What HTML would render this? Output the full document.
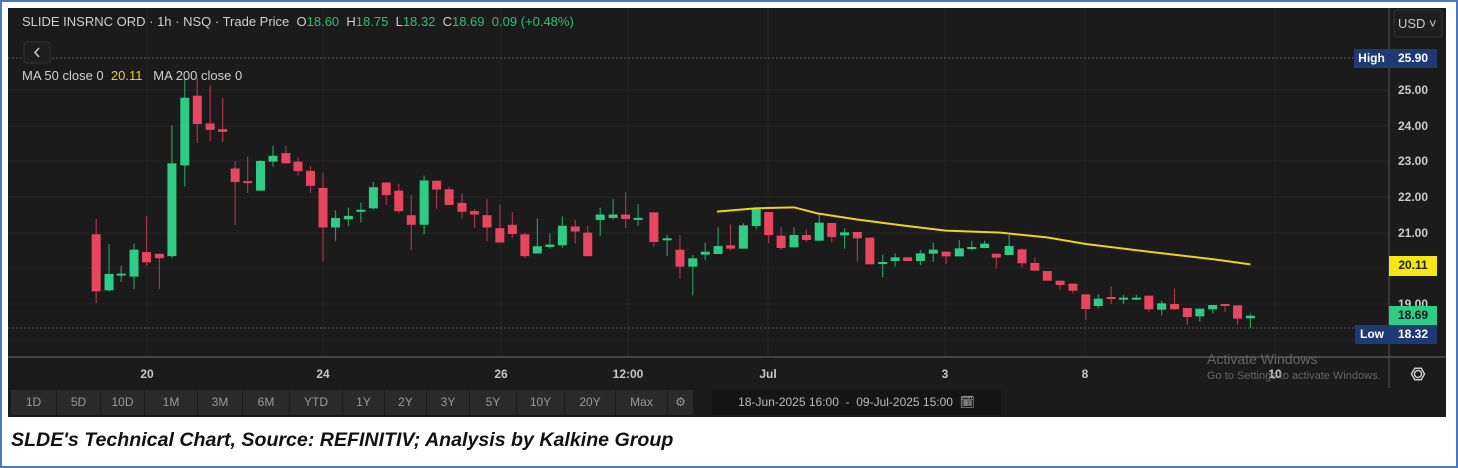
<!DOCTYPE html>
<html><head><meta charset="utf-8"><style>
*{margin:0;padding:0;box-sizing:border-box}
body{width:1458px;height:468px;background:#fff;position:relative;overflow:hidden;font-family:"Liberation Sans",sans-serif}
.frame{position:absolute;left:0;top:0;width:1458px;height:468px;border:2px solid #4a78c8}
.chart{position:absolute;left:8px;top:8px;width:1438px;height:409px;background:#1b1b1b}
.t{position:absolute;white-space:nowrap}
.g{color:#2fbf7a}
.b{position:absolute;top:390px;height:25px;background:#2a2a2a;color:#9a9a9a;font-size:12px;text-align:center;line-height:25px}
.lab{position:absolute;font-size:12px;font-weight:bold;text-align:center;line-height:19px}
.tl{position:absolute;top:367px;color:#c8c8c8;font-size:12px;font-weight:bold;transform:translateX(-50%)}
</style></head><body>
<div class="frame"></div>
<div class="chart"></div>
<svg style="position:absolute;left:0;top:0" width="1458" height="468" id="s">
<g stroke="#262626" stroke-width="1">
<line x1="8" y1="90" x2="1389" y2="90"/><line x1="8" y1="126" x2="1389" y2="126"/><line x1="8" y1="161" x2="1389" y2="161"/><line x1="8" y1="197" x2="1389" y2="197"/><line x1="8" y1="233" x2="1389" y2="233"/><line x1="8" y1="268" x2="1389" y2="268"/><line x1="8" y1="304" x2="1389" y2="304"/><line x1="8" y1="340" x2="1389" y2="340"/>
<line x1="147" y1="8" x2="147" y2="357"/><line x1="323" y1="8" x2="323" y2="357"/><line x1="501" y1="8" x2="501" y2="357"/><line x1="628" y1="8" x2="628" y2="357"/><line x1="768" y1="8" x2="768" y2="357"/><line x1="945" y1="8" x2="945" y2="357"/><line x1="1085" y1="8" x2="1085" y2="357"/><line x1="1275" y1="8" x2="1275" y2="357"/>
</g>
<line x1="8" y1="58" x2="1389" y2="58" stroke="#555" stroke-dasharray="2,2"/>
<line x1="8" y1="328" x2="1389" y2="328" stroke="#555" stroke-dasharray="2,2"/>
<line x1="8" y1="357" x2="1446" y2="357" stroke="#444" stroke-width="2"/>
<line x1="1389" y1="8" x2="1389" y2="388" stroke="#555" stroke-width="1"/>
<g id="c"></g>
<polyline id="ma" fill="none" stroke="#f0d020" stroke-width="2"/>
<rect x="1394" y="10" width="48" height="27" rx="3" fill="#1e1e1e" stroke="#333"/>
<circle cx="1418" cy="374" r="3.5" fill="none" stroke="#ccc" stroke-width="1.5"/>
<polygon points="1411.5,374 1414.8,368.3 1421.2,368.3 1424.5,374 1421.2,379.7 1414.8,379.7" fill="none" stroke="#ccc" stroke-width="1.5"/>
<rect x="24" y="42" width="26" height="21" rx="3" fill="#1e1e1e" stroke="#333"/>
<path d="M39 48 L35 52.5 L39 57" fill="none" stroke="#ccc" stroke-width="1.5"/>
</svg>
<div class="t" style="left:22px;top:14px;font-size:13px;color:#d0d0d0">SLIDE INSRNC ORD · 1h · NSQ · Trade Price &nbsp;O<span class="g">18.60</span> &nbsp;H<span class="g">18.75</span> &nbsp;L<span class="g">18.32</span> &nbsp;C<span class="g">18.69</span> &nbsp;<span class="g">0.09 (+0.48%)</span></div>
<div class="t" style="left:22px;top:68px;font-size:13px;color:#d0d0d0">MA 50 close 0 &nbsp;<span style="color:#f0d020">20.11</span> &nbsp; MA 200 close 0</div>
<div class="t" style="left:1398px;top:16px;font-size:13px;color:#ccc">USD ˅</div>
<div class="lab" style="left:1354px;top:49px;width:35px;background:#1d3a72;color:#fff">High</div>
<div class="lab" style="left:1389px;top:49px;width:48px;background:#1d3a72;color:#fff">25.90</div>
<div class="t" style="left:1398px;top:83px;font-size:12px;font-weight:bold;color:#ccc">25.00</div>
<div class="t" style="left:1398px;top:119px;font-size:12px;font-weight:bold;color:#ccc">24.00</div>
<div class="t" style="left:1398px;top:154px;font-size:12px;font-weight:bold;color:#ccc">23.00</div>
<div class="t" style="left:1398px;top:190px;font-size:12px;font-weight:bold;color:#ccc">22.00</div>
<div class="t" style="left:1398px;top:226px;font-size:12px;font-weight:bold;color:#ccc">21.00</div>
<div class="t" style="left:1398px;top:297px;font-size:12px;font-weight:bold;color:#ccc">19.00</div>
<div class="lab" style="left:1389px;top:256px;width:48px;height:20px;background:#f5e614;color:#222">20.11</div>
<div class="lab" style="left:1389px;top:306px;width:48px;height:19px;background:#2fcc85;color:#112">18.69</div>
<div class="lab" style="left:1355px;top:325px;width:34px;background:#1d3a72;color:#fff">Low</div>
<div class="lab" style="left:1389px;top:325px;width:48px;background:#1d3a72;color:#fff">18.32</div>
<div class="tl" style="left:147px">20</div><div class="tl" style="left:323px">24</div><div class="tl" style="left:501px">26</div><div class="tl" style="left:628px">12:00</div><div class="tl" style="left:768px">Jul</div><div class="tl" style="left:945px">3</div><div class="tl" style="left:1085px">8</div><div class="tl" style="left:1275px">10</div>
<div class="t" style="left:1207px;top:351px;font-size:14px;color:#666">Activate Windows</div>
<div class="t" style="left:1207px;top:370px;font-size:11px;color:#666">Go to Settings to activate Windows.</div>
<div class="b" style="left:11px;width:45px">1D</div><div class="b" style="left:57px;width:43px">5D</div><div class="b" style="left:101px;width:43px">10D</div><div class="b" style="left:145px;width:52px">1M</div><div class="b" style="left:198px;width:44px">3M</div><div class="b" style="left:243px;width:46px">6M</div><div class="b" style="left:290px;width:52px">YTD</div><div class="b" style="left:343px;width:41px">1Y</div><div class="b" style="left:385px;width:41px">2Y</div><div class="b" style="left:427px;width:42px">3Y</div><div class="b" style="left:470px;width:46px">5Y</div><div class="b" style="left:517px;width:47px">10Y</div><div class="b" style="left:565px;width:50px">20Y</div><div class="b" style="left:616px;width:51px">Max</div><div class="b" style="left:668px;width:25px">⚙</div>
<div class="b" style="left:712px;width:289px;background:#151515;color:#bbb">18-Jun-2025 16:00 &nbsp;-&nbsp; 09-Jul-2025 15:00 &nbsp;🗓</div>
<div class="t" style="left:11px;top:429px;font-size:19.6px;font-weight:bold;font-style:italic;color:#111">SLDE's Technical Chart, Source: REFINITIV; Analysis by Kalkine Group</div>
<script>
var A=[[44,'R',458,625,412,660],[79,'G',574,622,487,625],[112,'G',573,577,550,598],[147,'G',503,582,485,618],[181,'R',510,540,405,550],[216,'R',515,528,515,618],[250,'G',250,522,138,528],[285,'G',58,256,0,318],[319,'R',52,135,0,190],[354,'R',133,152,22,185],[388,'R',150,158,58,188],[422,'R',265,305,243,430],[456,'R',302,306,230,337],[491,'G',243,330,240,330],[525,'G',228,245,198,260],[560,'R',220,250,198,250],[593,'R',245,273,233,287],[627,'R',272,316,257,337],[661,'R',322,438,278,538],[695,'G',410,438,388,477],[730,'G',404,414,380,435],[764,'G',386,392,365,423],[798,'G',320,382,305,385],[833,'R',306,343,306,372],[867,'R',330,390,310,397],[901,'R',402,430,343,505],[936,'G',300,430,286,458],[970,'R',301,327,301,383],[1004,'R',326,372,318,372],[1039,'R',366,392,338,412],[1073,'R',390,400,383,440],[1107,'R',402,438,355,478],[1142,'R',440,482,372,482],[1176,'R',430,457,393,468],[1210,'R',458,522,453,528],[1244,'G',493,514,412,514],[1278,'G',488,495,455,500],[1312,'G',433,490,405,497],[1347,'R',435,450,415,485],[1381,'R',453,522,433,522],[1415,'G',400,416,380,463],[1450,'G',400,410,355,415],[1484,'R',400,413,335,440],[1518,'G',410,416,370,433]];
var B=[[10,'R',97,186,97,200],[44,'G',175,181,165,228],[77,'R',209,260,165,296],[110,'G',235,260,225,347],[142,'G',215,224,188,240],[175,'G',198,222,142,222],[207,'R',196,206,133,212],[240,'G',136,206,130,206],[273,'G',85,138,85,148],[305,'R',96,165,96,190],[337,'R',167,204,140,210],[370,'G',165,202,142,202],[402,'R',165,180,148,186],[435,'G',128,182,100,182],[467,'R',129,171,129,187],[500,'G',157,166,145,206],[533,'R',156,175,156,244],[565,'R',173,253,173,253],[598,'G',246,252,224,292],[630,'G',232,243,220,260],[662,'R',232,243,232,243],[695,'G',220,243,210,255],[728,'G',209,221,188,246],[761,'R',215,229,215,252],[795,'G',205,229,180,229],[827,'G',201,206,183,211],[860,'G',191,204,182,204],[890,'R',221,233,221,265],[923,'G',198,225,165,225],[956,'R',208,250,205,262],[989,'R',249,272,233,272],[1021,'R',273,302,273,302],[1054,'R',302,315,302,328],[1087,'R',311,332,311,340],[1120,'R',343,387,343,420],[1152,'G',356,378,343,385],[1185,'R',351,357,320,372],[1217,'G',353,358,345,372],[1250,'G',353,358,345,360],[1282,'R',347,388,347,395],[1315,'G',370,389,362,406],[1348,'R',372,388,325,390],[1381,'R',384,411,384,435],[1413,'G',386,409,386,425],[1446,'G',375,388,375,400],[1478,'R',372,378,372,395],[1510,'R',376,416,376,435],[1543,'G',407,415,400,445]];
var h='';
function add(x,c,t,b,wt,wb){var col=c=='R'?'#e8455f':'#2ecc85';var wc=c=='R'?'#a83447':'#23995f';
 h+='<line x1="'+x+'" x2="'+x+'" y1="'+wt+'" y2="'+wb+'" stroke="'+wc+'" stroke-width="1.2"/>';
 var hh=Math.max(b-t,2);h+='<rect x="'+(x-4.5)+'" y="'+t+'" width="9" height="'+hh+'" fill="'+col+'"/>';}
A.forEach(function(d){add(80+d[0]/2.72,d[1],78+d[2]/2.93,78+d[3]/2.93,Math.max(57,78+d[4]/2.93),78+d[5]/2.93)});
B.forEach(function(d){add(650+d[0]/2.57,d[1],180+d[2]/3,180+d[3]/3,180+d[4]/3,180+d[5]/3)});
document.getElementById('c').innerHTML=h;
var M=[[172,95],[270,85],[370,82],[430,100],[530,118],[640,135],[760,152],[900,158],[1020,172],[1120,192],[1280,215],[1450,238],[1543,253]];
document.getElementById('ma').setAttribute('points',M.map(function(p){return (650+p[0]/2.57)+','+(180+p[1]/3)}).join(' '));
</script>
</body></html>
